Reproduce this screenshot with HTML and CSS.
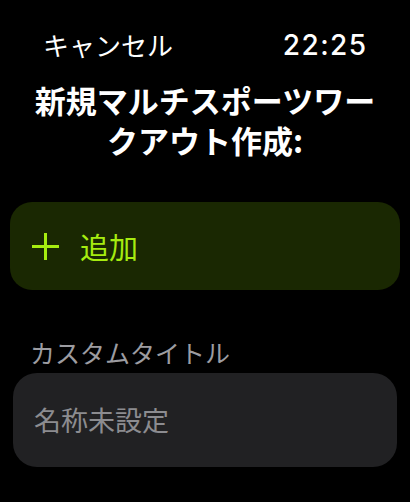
FILE: index.html
```html
<!DOCTYPE html>
<html lang="ja">
<head>
<meta charset="utf-8">
<link rel="stylesheet" href="styles.css">
</head>
<body>
<div class="screen">
  <div class="status">
    <span class="cancel">キャンセル</span>
    <span class="time">22:25</span>
  </div>
  <h1 class="title">新規マルチスポーツワークアウト作成:</h1>
  <div class="add-btn">
    <svg class="plus" width="27" height="27" viewBox="0 0 27 27"><path d="M13.5 0 V27 M0 13.5 H27" stroke="currentColor" stroke-width="3" fill="none"/></svg>
    <span class="add-label">追加</span>
  </div>
  <div class="field-label">カスタムタイトル</div>
  <div class="field">
    <span class="placeholder">名称未設定</span>
  </div>
</div>
</body>
</html>
```

FILE: styles.css
```css
html, body {
  margin: 0;
  padding: 0;
  background: #000;
}
body {
  width: 410px;
  height: 502px;
  overflow: hidden;
  font-family: "Noto Sans CJK JP", "Noto Sans", sans-serif;
  color: #fff;
}
.screen {
  display: flex;
  flex-direction: column;
}
.status {
  display: flex;
  justify-content: space-between;
  align-items: center;
  padding: 28px 44px 0 43px;
  height: 34px;
}
.cancel {
  font-size: 26px;
  line-height: 34px;
  color: #fff;
}
.time {
  font-family: "Inter", "Roboto", sans-serif;
  font-size: 28px;
  font-weight: 500;
  letter-spacing: 1.4px;
  margin-right: -1.4px;
  line-height: 34px;
}
.title {
  margin: 18px 0 0;
  padding: 0 25px;
  font-size: 31px;
  font-weight: 700;
  line-height: 40px;
  text-align: center;
}
.add-btn {
  margin: 42px 10px 0;
  height: 88px;
  border-radius: 22px;
  background: #1a2802;
  color: #a6ec10;
  display: flex;
  align-items: center;
  gap: 21px;
  padding-left: 22px;
}
.plus {
  display: block;
}
.add-label {
  font-size: 29px;
  line-height: 34px;
}
.field-label {
  margin: 46px 0 0 30px;
  font-size: 25px;
  line-height: 32px;
  color: #9c9ca1;
}
.field {
  margin: 5px 13px 0;
  height: 94px;
  border-radius: 24px;
  background: #212123;
  display: flex;
  align-items: center;
  padding-left: 21px;
}
.placeholder {
  font-size: 27px;
  line-height: 34px;
  color: #8c8c90;
}
```
